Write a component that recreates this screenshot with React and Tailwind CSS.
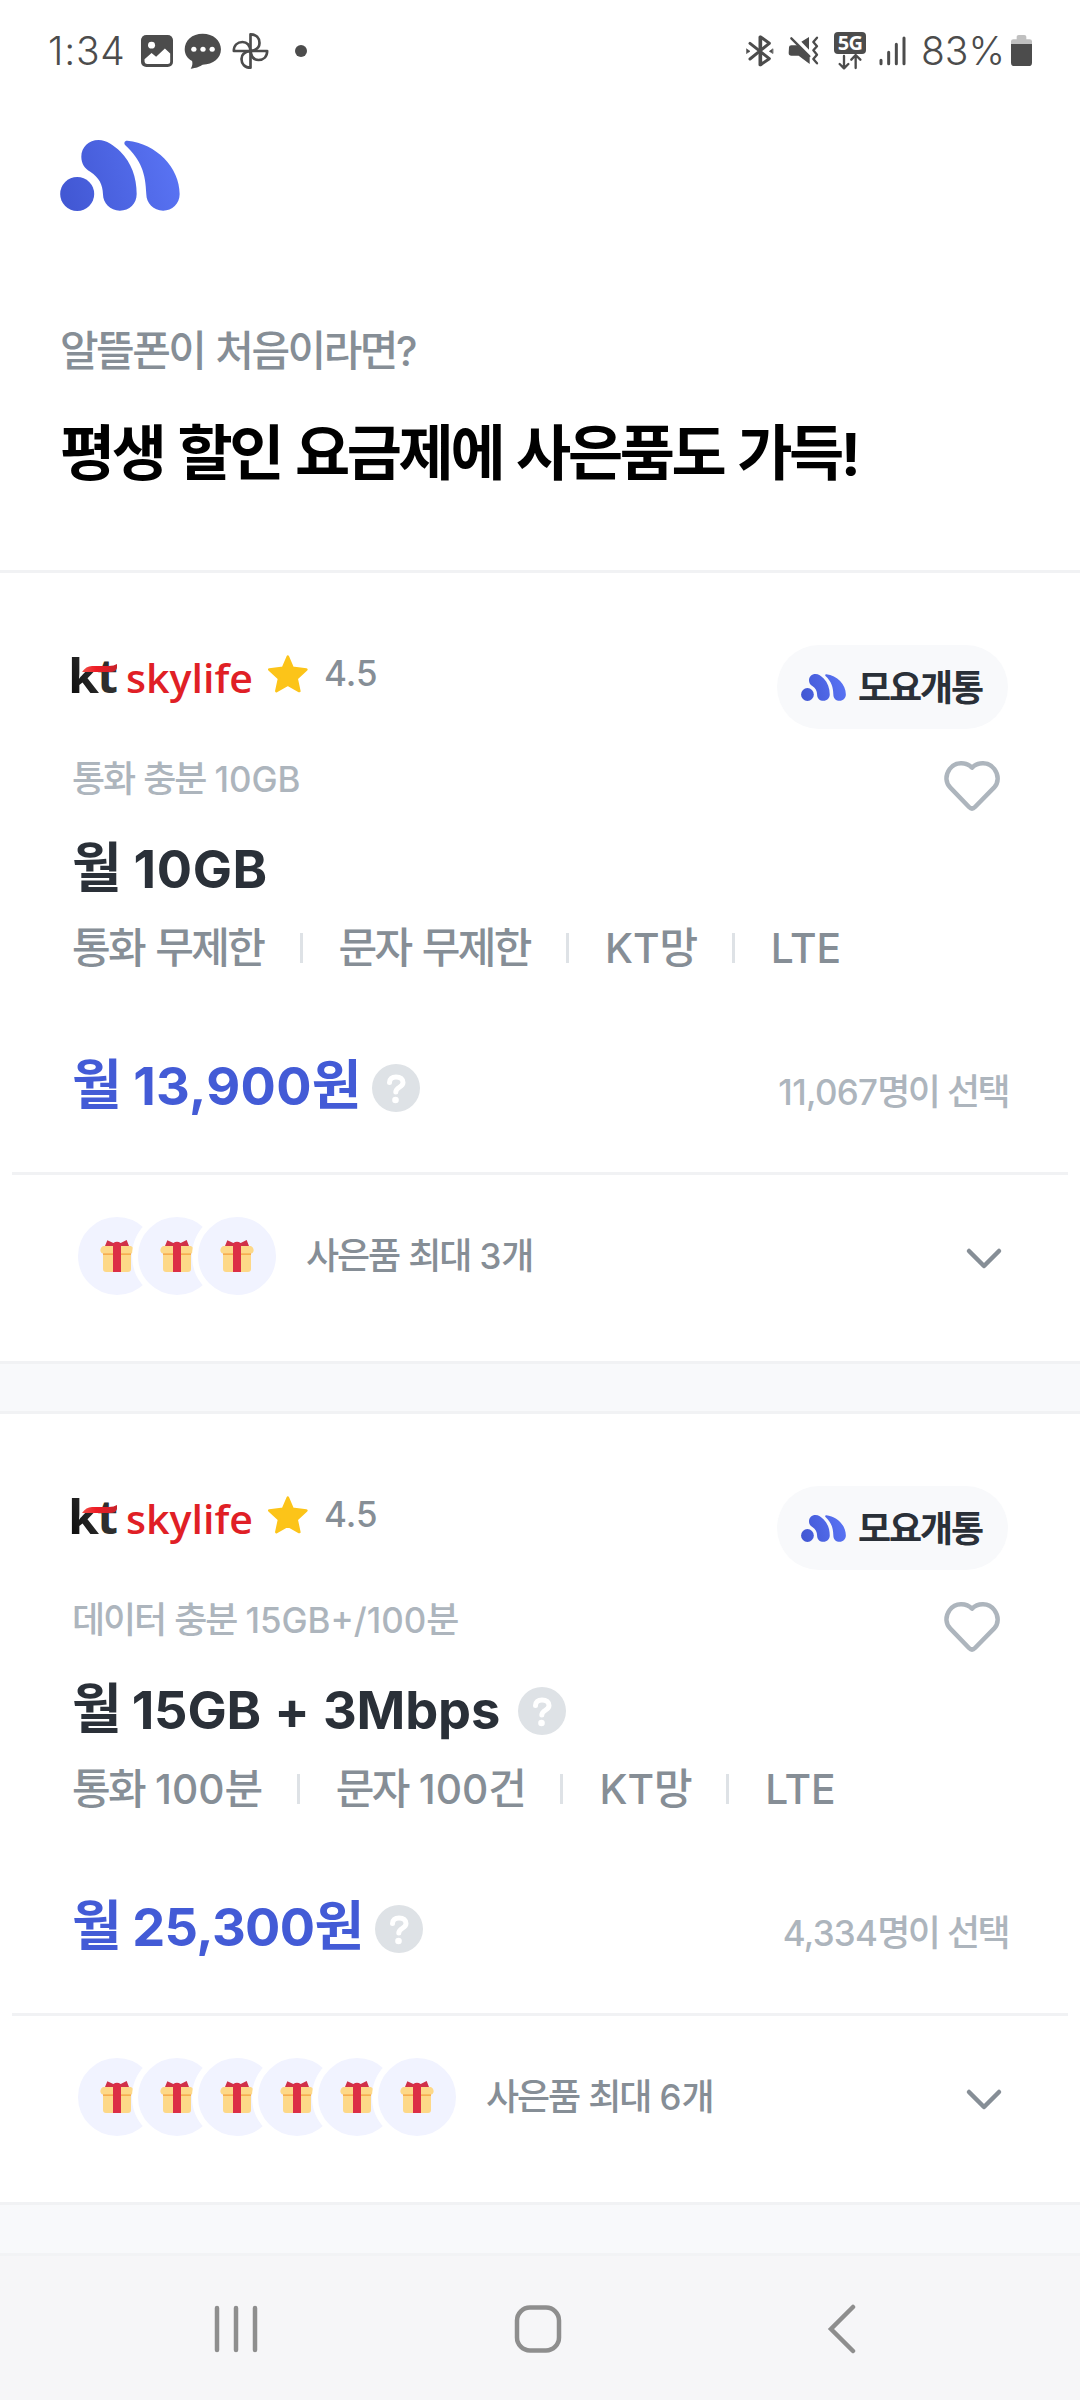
import React from "react";

const FONT = "font-['Inter','Noto_Sans_CJK_KR',sans-serif]";

/* Sets Hangul and Latin runs with their own size and tracking. */
function Mixed({ children, latin = "tracking-[0em]", hangul = "tracking-[-0.06em]" }) {
  const runs = children.match(/[\uAC00-\uD7A3]+|[^\uAC00-\uD7A3]+/g) || [];
  return runs.map((run, i) =>
    /[\uAC00-\uD7A3]/.test(run) ? (
      <span key={i} className={hangul}>{run}</span>
    ) : (
      <span key={i} className={`text-[0.97em] ${latin}`}>{run}</span>
    )
  );
}

function MoyoMark({ className, id }) {
  return (
    <svg className={className} viewBox="174 420 349 213" preserveAspectRatio="none" fill={`url(#${id})`}>
      <defs>
        <linearGradient id={id} gradientUnits="userSpaceOnUse" x1="190" y1="590" x2="500" y2="500">
          <stop offset="0" stopColor="#4258d4" />
          <stop offset="1" stopColor="#5872f2" />
        </linearGradient>
      </defs>
      <ellipse cx="224" cy="582" rx="49.500" ry="51" />
      <path d="M286 420C310 420 330 436 350 455C381 488 397 530 397 582C397 611 376 632 348 632C320 632 299 610 299 583C298 552 288 534 262 515C246 505 236 491 236 470C236 441 258 420 286 420Z" />
      <path d="M370 422C454 431 522 502 522 582C522 611 500 632 474 632C446 632 425 610 425 583C423 520 410 480 364 436C358 428 363 421 370 422Z" />
    </svg>
  );
}

function StatusBar() {
  return (
    <div className="flex h-[102px] items-center pl-[48px] pr-[48px] font-[350] text-[#4c4c4c]">
      <span className="w-[93px] text-[39px] leading-[48px] tracking-[0.02em]">1:34</span>
      <svg className="h-[32px] w-[32px]" viewBox="408 107 91 94" preserveAspectRatio="none">
        <rect x="408" y="107" width="91" height="94" rx="15" fill="#4c4c4c" />
        <circle cx="438" cy="137" r="10" fill="#fff" />
        <path d="M418 178L438 160L451 171L476 147L491 161V186Q491 192 484 192H425Q418 192 418 185Z" fill="#fff" />
      </svg>
      <svg className="ml-[11px] h-[36px] w-[38px]" viewBox="537 100 108 108" preserveAspectRatio="none">
        <path d="M590 102C620 102 642 122 642 149C642 176 620 195 590 195C584 200 570 205 556 207C561 199 562 192 560 184C546 177 539 164 539 149C539 122 560 102 590 102Z" fill="#4c4c4c" />
        <circle cx="565" cy="149" r="7.5" fill="#fff" />
        <circle cx="591" cy="149" r="7.5" fill="#fff" />
        <circle cx="617" cy="149" r="7.5" fill="#fff" />
      </svg>
      <svg className="ml-[9px] h-[38px] w-[39px]" viewBox="671 97 114 114" fill="none" stroke="#4c4c4c" strokeWidth="8" strokeLinejoin="round">
        <path d="M728 154V104C745 104 755 115 755 130C755 145 745 152 728 154Z" />
        <path d="M728 154H778C778 171 767 181 752 181C737 181 730 171 728 154Z" />
        <path d="M728 154V204C711 204 701 193 701 178C701 163 711 156 728 154Z" />
        <path d="M728 154H678C678 137 689 127 704 127C719 127 726 137 728 154Z" />
      </svg>
      <span className="ml-[25px] size-[12px] rounded-full bg-[#4c4c4c]" />
      <div className="ml-auto flex items-center">
        <svg className="h-[34px] w-[28px]" viewBox="136 102 84 102" fill="none" stroke="#4c4c4c" strokeWidth="9" strokeLinecap="round" strokeLinejoin="round">
          <path d="M148 130L206 176L180 194V111L206 130L148 177" />
          <path d="M178 111V194" />
          <path d="M138 147L148 154L138 160ZM216 147L206 154L216 160Z" fill="#4c4c4c" strokeWidth="2" />
        </svg>
        <svg className="ml-[14px] h-[32px] w-[32px]" viewBox="262 106 96 96" fill="#4c4c4c">
          <path d="M302 126L325 112V150ZM265 143Q265 137 272 137H290L327 174V193L294 168H272Q264 168 264 160Z" />
          <path d="M272 116L326 170" stroke="#4c4c4c" strokeWidth="7" strokeLinecap="round" />
          <path d="M349 114L338 127L349 140L338 152L349 165L338 178L349 191" fill="none" stroke="#4c4c4c" strokeWidth="7" strokeLinecap="round" strokeLinejoin="round" />
        </svg>
        <div className="ml-[14px] flex h-[38px] w-[32px] flex-col items-center">
          <span className="flex h-[22px] w-[32px] items-center justify-center rounded-[4px] bg-[#4c4c4c] font-['Open_Sans',sans-serif] text-[20px] font-bold leading-[22px] tracking-[-0.04em] text-white">5G</span>
          <svg className="h-[16px] w-[24px]" viewBox="414 158 72 48" fill="none" stroke="#4c4c4c" strokeWidth="7" strokeLinecap="round" strokeLinejoin="round">
            <path d="M432 164V200M419 188L432 201L445 188M467 200V163M454 175L467 161L481 175" />
          </svg>
        </div>
        <svg className="ml-[12px] h-[32px] w-[30px]" viewBox="534 104 90 96" stroke="#4c4c4c" strokeWidth="9" strokeLinecap="round">
          <path d="M543 180V190M566 156V190M589 132V190M612 113V190" />
        </svg>
        <span className="ml-[13px] w-[90px] text-[39px] leading-[48px] tracking-[0em]">83%</span>
        <svg className="h-[34px] w-[21px]" viewBox="933 102 63 102">
          <path d="M933 132V124Q933 118 940 118H950V110Q950 105 956 105H973Q979 105 979 110V118H989Q996 118 996 124V132Z" fill="#c0c0c0" />
          <path d="M933 132H996V188Q996 198 986 198H943Q933 198 933 188Z" fill="#4c4c4c" />
        </svg>
      </div>
    </div>
  );
}

function CarrierLogo({ id }) {
  return (
    <svg className="h-[54px] w-[190px] overflow-visible" viewBox="0 0 190 54" role="img">
      <defs>
        <linearGradient id={id} x1="0" y1="1" x2="1" y2="0">
          <stop offset="0" stopColor="#050505" />
          <stop offset="1" stopColor="#3c3c3c" />
        </linearGradient>
        <linearGradient id={`${id}r`} x1="0" y1="0" x2="1" y2="0">
          <stop offset="0" stopColor="#f0524a" />
          <stop offset="0.4" stopColor="#ee1c25" />
          <stop offset="1" stopColor="#c8222a" />
        </linearGradient>
      </defs>
      <text x="-4" y="45" textLength="31" lengthAdjust="spacingAndGlyphs" fill={`url(#${id})`} className="font-['Open_Sans',sans-serif] text-[47px] font-bold">k</text>
      <text x="25" y="45" textLength="21" lengthAdjust="spacingAndGlyphs" fill="#2e2e2e" className="font-['Open_Sans',sans-serif] text-[47px] font-bold">t</text>
      <path d="M10 24Q14 18 20 18H37Q42 18 45 16V20Q44 24 38 24Z" fill={`url(#${id}r)`} />
      <text x="54" y="45" textLength="127" lengthAdjust="spacingAndGlyphs" fill="#e01f26" className="font-['Open_Sans',sans-serif] text-[39px] font-semibold">skylife</text>
    </svg>
  );
}

function Star() {
  return (
    <svg className="h-[38px] w-[40px]" viewBox="655 108 119 113" fill="#fcc419" stroke="#fcc419" strokeWidth="8" strokeLinejoin="round">
      <path d="M714 113L728 146L769 151L740 178L748 215L714 196L680 215L688 178L659 151L700 146Z" />
    </svg>
  );
}

function Help() {
  return (
    <span className="flex size-[48px] shrink-0 items-center justify-center rounded-full bg-[#dee2e6]">
      <svg className="size-[48px]" viewBox="0 0 48 48" fill="none">
        <path d="M17.500 18.500C17.500 15 20 13 24 13C28.500 13 31 15.300 31 18.500C31 23.500 23.800 23 23.800 28" stroke="#fff" strokeWidth="5" strokeLinecap="round" />
        <circle cx="23.500" cy="36" r="3.300" fill="#fff" />
      </svg>
    </span>
  );
}

function Heart() {
  return (
    <svg className="h-[54px] w-[60px]" viewBox="606 417 180 162" fill="none" stroke="#adb5bd" strokeWidth="13.500" strokeLinejoin="round">
      <path d="M696 443C679 425 646 424 629 447C614 468 618 490 631 503L687 561Q696 570 705 561L762 503C776 488 777 466 763 447C746 424 713 425 696 443Z" />
    </svg>
  );
}

function Gift() {
  return (
    <span className="-ml-[30px] flex size-[90px] items-center justify-center rounded-full border-[6px] border-white bg-[#f1f3ff] first:ml-0">
      <svg className="h-[34px] w-[36px]" viewBox="507 624 108 102">
        <path d="M519 660H603V714Q603 723 594 723H528Q519 723 519 714Z" fill="#fdd888" />
        <path d="M519 645H603Q611 650 611 657Q611 666 602 668H520Q511 666 511 657Q511 650 519 645Z" fill="#fdd888" />
        <path d="M519 667H603V672H519Z" fill="#f6ad50" />
        <path d="M525 645L532 628L550 636Q561 629 572 636L590 627L597 645Z" fill="#d03049" />
        <path d="M549 640Q561 628 573 640V723H549Z" fill="#dc2e46" />
      </svg>
    </span>
  );
}

function PlanCard({ plan }) {
  return (
    <section className="h-[794px] border-y-[3px] border-[#f1f2f4] bg-white">
      <div className="flex h-[599px] flex-col px-[72px] pt-[72px]">
        <div className="flex h-[84px] items-start">
          <div className="flex h-[54px] items-center pt-[6px]">
            <CarrierLogo id={`kt-${plan.id}`} />
            <span className="ml-[6px] -mt-[3px]"><Star /></span>
            <span className="ml-[16px] -mt-[4px] text-[36px] font-medium leading-[40px] text-[#868e96]"><Mixed>4.5</Mixed></span>
          </div>
          <div className="ml-auto flex h-[84px] w-[231px] items-center rounded-full bg-[#f8f9fb] pl-[24px] text-[36px] font-bold leading-[48px] text-[#2a3038]">
            <MoyoMark id={`mark-${plan.id}`} className="mr-[12px] h-[27px] w-[45px]" />
            <span className="mt-[2px]"><Mixed>모요개통</Mixed></span>
          </div>
        </div>
        <div className="mt-[24px] flex h-[66px] justify-between">
          <p className="pt-[2px] text-[36px] font-medium leading-[48px] text-[#adb5bd]"><Mixed>{plan.label}</Mixed></p>
          <div className="mr-[6px] pt-[6px]"><Heart /></div>
        </div>
        <h2 className="mt-[14px] flex h-[72px] items-center gap-[18px] text-[54px] font-bold leading-[72px] text-[#2a3038]">
          <span><Mixed latin={plan.dataTracking}>{plan.data}</Mixed></span>
          {plan.dataHelp && <span className="mt-[2px]"><Help /></span>}
        </h2>
        <div className="mt-[13px] flex h-[60px] items-center text-[42px] font-medium leading-[60px] text-[#868e96]">
          {plan.specs.map((spec, i) => (
            <React.Fragment key={spec}>
              {i > 0 && <span className="mx-[36px] h-[30px] w-[3px] bg-[#dee2e6]" />}
              <span className="whitespace-nowrap"><Mixed>{spec}</Mixed></span>
            </React.Fragment>
          ))}
        </div>
        <div className="mt-[72px] flex h-[72px] items-center">
          <span className="text-[54px] font-bold leading-[72px] text-[#435bd6]"><Mixed latin={plan.priceTracking}>{plan.price}</Mixed></span>
          <span className="ml-[14px] mt-[4px]"><Help /></span>
          <span className="ml-auto mt-[12px] text-[36px] font-medium leading-[48px] text-[#adb5bd]"><Mixed latin="tracking-[-0.02em]" hangul="tracking-[-0.072em]">{plan.chosen}</Mixed></span>
        </div>
      </div>
      <div className="mx-[12px] flex h-[165px] items-center border-t-[3px] border-[#f1f2f4] pl-[60px] pr-[64px]">
        <div className="flex">
          {Array.from({ length: plan.gifts }, (_, i) => <Gift key={i} />)}
        </div>
        <span className="ml-[24px] text-[36px] font-medium leading-[48px] text-[#868e96]"><Mixed>{`사은품 최대 ${plan.gifts}개`}</Mixed></span>
        <svg className="ml-auto mt-[4px] h-[24px] w-[40px]" viewBox="0 0 40 24" fill="none" stroke="#868e96" strokeWidth="4.500" strokeLinecap="round" strokeLinejoin="round">
          <path d="M5 5L20 20L35 5" />
        </svg>
      </div>
    </section>
  );
}

const plans = [
  {
    id: "a",
    label: "통화 충분 10GB",
    data: "월 10GB",
    dataTracking: "tracking-[0.012em] [word-spacing:2px]",
    specs: ["통화 무제한", "문자 무제한", "KT망", "LTE"],
    price: "월 13,900원",
    priceTracking: "tracking-[0.006em] [word-spacing:2px]",
    chosen: "11,067명이 선택",
    gifts: 3,
  },
  {
    id: "b",
    label: "데이터 충분 15GB+/100분",
    data: "월 15GB + 3Mbps",
    dataTracking: "tracking-[-0.003em] [word-spacing:1px]",
    dataHelp: true,
    specs: ["통화 100분", "문자 100건", "KT망", "LTE"],
    price: "월 25,300원",
    priceTracking: "tracking-[-0.012em] [word-spacing:2px]",
    chosen: "4,334명이 선택",
    gifts: 6,
  },
];

export default function App() {
  return (
    <div lang="ko" className={`flex h-[2400px] w-[1080px] flex-col overflow-hidden bg-white ${FONT}`}>
      <StatusBar />
      <header className="h-[468px] px-[60px] pt-[38px]">
        <MoyoMark id="brand" className="h-[71px] w-[120px]" />
        <p className="mt-[110px] text-[42px] font-medium leading-[60px] text-[#868e96]"><Mixed>알뜰폰이 처음이라면?</Mixed></p>
        <h1 className="mt-[29px] text-[60px] font-bold leading-[84px] text-black"><Mixed hangul="tracking-[-0.056em]">평생 할인 요금제에 사은품도 가득!</Mixed></h1>
      </header>
      <main className="flex h-[1683px] flex-col gap-[47px] bg-[#f8f9fb]">
        {plans.map((plan) => <PlanCard key={plan.id} plan={plan} />)}
      </main>
      <nav className="flex h-[147px] items-center justify-between border-t-[3px] border-[#f2f3f5] bg-[#f6f6f8] pl-[212px] pr-[222px] pt-[2px]">
        <svg className="h-[50px] w-[48px]" viewBox="0 0 48 50" stroke="#8e8e8e" strokeWidth="4.500" strokeLinecap="round">
          <path d="M5 4V46M24 4V46M43 4V46" />
        </svg>
        <svg className="-ml-[10px] h-[50px] w-[50px]" viewBox="0 0 50 50" fill="none" stroke="#8e8e8e" strokeWidth="4.500">
          <rect x="4" y="3.500" width="42" height="43" rx="13" />
        </svg>
        <svg className="h-[50px] w-[32px]" viewBox="0 0 32 50" fill="none" stroke="#8e8e8e" strokeWidth="4.500" strokeLinecap="round" strokeLinejoin="miter">
          <path d="M27 3L5 25L27 47" />
        </svg>
      </nav>
    </div>
  );
}
